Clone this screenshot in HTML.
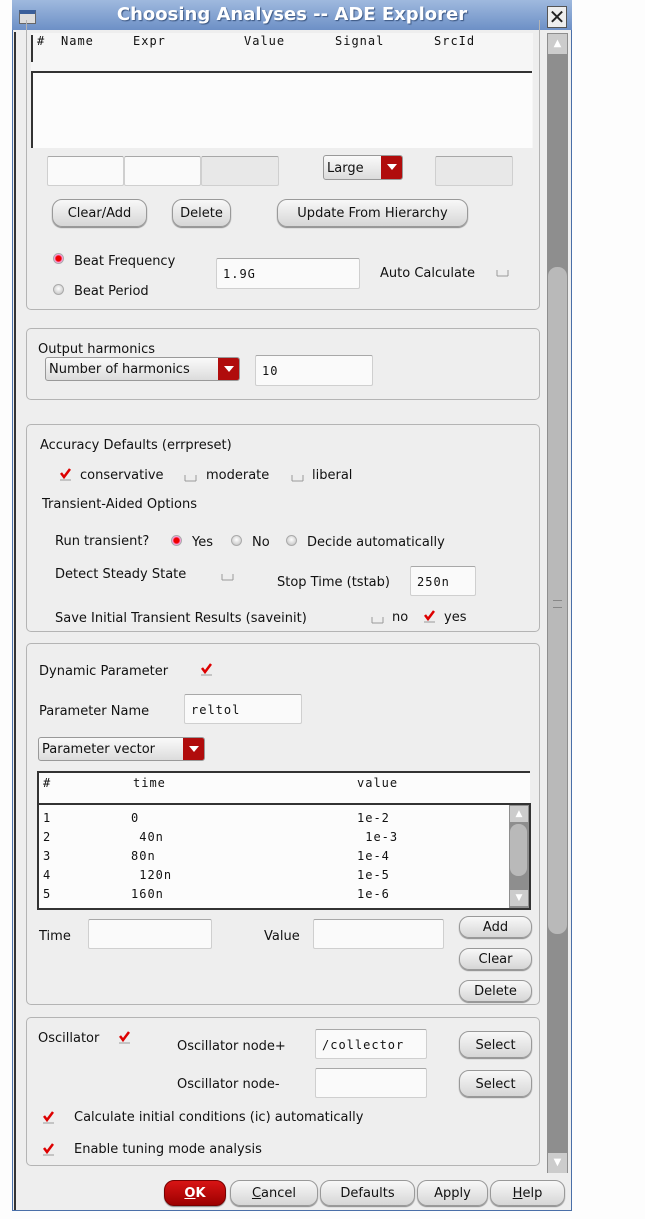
<!DOCTYPE html>
<html><head><meta charset="utf-8"><style>
*{box-sizing:border-box;margin:0;padding:0}
body{width:645px;height:1219px;background:#fdfdfd;position:relative;overflow:hidden;font-family:"DejaVu Sans","Liberation Sans",sans-serif;font-size:13px;color:#111}
.a{position:absolute}
div[class="a"]{margin-top:2px}
.win{left:12px;top:0;width:560px;height:1211px;background:#eeeeee;border:1px solid #4a6fa8;border-top:none}
.title{left:12px;top:0;width:560px;height:30px;background:linear-gradient(#9fb9de,#6d90c6);color:#fff;font-weight:bold;font-size:18px;text-align:center;line-height:30px;text-shadow:1px 1px 1px #3a5580}
.grp{border:1px solid #b4b4b4;border-radius:5px}
.inp{background:#fafafa;border:1px solid #cfcfcf;border-top-color:#a8a8a8;border-radius:2px;font-family:"DejaVu Sans Mono","Liberation Mono",monospace;font-size:12px;padding:4px 6px;letter-spacing:1px}
.btn{background:linear-gradient(#f8f8f8,#d6d6d6);border:1px solid #999;border-radius:10px;text-align:center;font-size:13px;box-shadow:0 1px 1px #888;padding-top:2px}
.dd{background:linear-gradient(#fafafa,#dcdcdc);border:1px solid #999;border-radius:3px;font-size:13px;padding-left:3px;padding-top:2px;overflow:hidden}
.dd i{position:absolute;right:0;top:0;bottom:0;width:21px;background:#b00c0c}
.dd i:after{content:"";position:absolute;left:6px;top:8px;border-left:5px solid transparent;border-right:5px solid transparent;border-top:6px solid #fff}
.mono{font-family:"DejaVu Sans Mono","Liberation Mono",monospace;font-size:12px;letter-spacing:1px;margin-top:1px}
.cb{width:13px;height:13px}
.rad{width:11px;height:11px;border-radius:50%;background:radial-gradient(circle at 50% 40%,#fff,#bbb);border:1px solid #aaa}
.rad.on{background:radial-gradient(circle,#e00 40%,#f9d 60%,#ddd)}
</style></head><body>
<div class="a win"></div>
<div class="a title">Choosing Analyses -- ADE Explorer</div>
<div class="a" style="left:19px;top:8px;width:17px;height:14px;background:#ddd;border:1px solid #666;border-top:4px solid #3a5f9a"></div>
<div class="a" style="left:547px;top:4px;width:20px;height:22px;background:#eee;border:1px solid #555;font-size:20px;line-height:20px;text-align:center;color:#222">✕</div>
<div class="a" style="left:14px;top:30px;width:2px;height:1178px;background:#333"></div>
<!-- scrollbar -->
<div class="a" style="left:547px;top:31px;width:21px;height:1140px;background:#8e8e8e"></div>
<div class="a" style="left:548px;top:32px;width:19px;height:20px;background:#ccc;color:#fff;font-size:10px;text-align:center;line-height:20px">▲</div>
<div class="a" style="left:548px;top:265px;width:19px;height:667px;background:#b9b9b9;border-radius:9px"></div>
<div class="a" style="left:553px;top:598px;width:9px;height:8px;border-top:1px solid #888;border-bottom:1px solid #888"></div>
<div class="a" style="left:548px;top:1151px;width:19px;height:20px;background:#ccc;color:#fff;font-size:10px;text-align:center;line-height:20px">▼</div>

<div class="a grp" style="left:26px;top:20px;width:514px;height:290px;border-top:none;border-radius:0 0 5px 5px"></div>
<!-- top table -->
<div class="a" style="left:31px;top:31px;width:502px;height:115px;background:#f6f6f6"></div>
<div class="a" style="left:31px;top:33px;width:2px;height:27px;background:#333"></div>
<div class="a mono" style="left:37px;top:33px;">#</div>
<div class="a mono" style="left:61px;top:33px;">Name</div>
<div class="a mono" style="left:133px;top:33px;">Expr</div>
<div class="a mono" style="left:244px;top:33px;">Value</div>
<div class="a mono" style="left:335px;top:33px;">Signal</div>
<div class="a mono" style="left:434px;top:33px;">SrcId</div>
<div class="a" style="left:31px;top:69px;width:501px;height:77px;background:#fcfcfc;border-top:2px solid #333;border-left:2px solid #333"></div>
<div class="a inp" style="left:47px;top:156px;width:77px;height:30px"></div>
<div class="a inp" style="left:124px;top:156px;width:77px;height:30px"></div>
<div class="a inp" style="left:201px;top:156px;width:78px;height:30px;background:#e8e8e8"></div>
<div class="a dd" style="left:323px;top:155px;width:80px;height:25px;line-height:21px">Large<i></i></div>
<div class="a inp" style="left:435px;top:156px;width:78px;height:30px;background:#e8e8e8"></div>
<div class="a btn" style="left:52px;top:199px;width:95px;height:28px;line-height:24px">Clear/Add</div>
<div class="a btn" style="left:172px;top:199px;width:59px;height:28px;line-height:24px">Delete</div>
<div class="a btn" style="left:277px;top:199px;width:191px;height:28px;line-height:24px">Update From Hierarchy</div>
<div class="a rad on" style="left:53px;top:253px"></div>
<div class="a" style="left:74px;top:252px">Beat Frequency</div>
<div class="a rad" style="left:53px;top:284px"></div>
<div class="a" style="left:74px;top:282px">Beat Period</div>
<div class="a inp" style="left:216px;top:258px;width:144px;height:31px;padding-top:8px">1.9G</div>
<div class="a" style="left:380px;top:264px">Auto Calculate</div>
<svg class="a cb" style="left:496px;top:264px" viewBox="0 0 13 13"><path d="M1 12h11M1 6v6M12 6v6" stroke="#999" fill="none"/></svg>

<!-- harmonics -->
<div class="a grp" style="left:26px;top:328px;width:514px;height:72px"></div>
<div class="a" style="left:38px;top:340px">Output harmonics</div>
<div class="a dd" style="left:45px;top:357px;width:195px;height:24px;line-height:20px">Number of harmonics<i></i></div>
<div class="a inp" style="left:255px;top:355px;width:118px;height:31px;padding-top:8px">10</div>

<!-- accuracy -->
<div class="a grp" style="left:26px;top:424px;width:514px;height:208px"></div>
<div class="a" style="left:40px;top:436px">Accuracy Defaults (errpreset)</div>
<svg class="a cb" style="left:59px;top:468px" viewBox="0 0 13 13"><path d="M1 12h11" stroke="#999"/><path d="M2 5l3 4 6-8" stroke="#d00" stroke-width="2.5" fill="none"/></svg>
<div class="a" style="left:80px;top:466px">conservative</div>
<svg class="a cb" style="left:184px;top:469px" viewBox="0 0 13 13"><path d="M1 12h11M1 6v6M12 6v6" stroke="#999" fill="none"/></svg>
<div class="a" style="left:206px;top:466px">moderate</div>
<svg class="a cb" style="left:291px;top:469px" viewBox="0 0 13 13"><path d="M1 12h11M1 6v6M12 6v6" stroke="#999" fill="none"/></svg>
<div class="a" style="left:312px;top:466px">liberal</div>
<div class="a" style="left:42px;top:495px">Transient-Aided Options</div>
<div class="a" style="left:55px;top:532px">Run transient?</div>
<div class="a rad on" style="left:171px;top:535px"></div>
<div class="a" style="left:192px;top:533px">Yes</div>
<div class="a rad" style="left:231px;top:535px"></div>
<div class="a" style="left:252px;top:533px">No</div>
<div class="a rad" style="left:286px;top:535px"></div>
<div class="a" style="left:307px;top:533px">Decide automatically</div>
<div class="a" style="left:55px;top:565px">Detect Steady State</div>
<svg class="a cb" style="left:221px;top:568px" viewBox="0 0 13 13"><path d="M1 12h11M1 6v6M12 6v6" stroke="#999" fill="none"/></svg>
<div class="a" style="left:277px;top:573px">Stop Time (tstab)</div>
<div class="a inp" style="left:410px;top:566px;width:66px;height:30px;padding-top:8px">250n</div>
<div class="a" style="left:55px;top:609px">Save Initial Transient Results (saveinit)</div>
<svg class="a cb" style="left:371px;top:611px" viewBox="0 0 13 13"><path d="M1 12h11M1 6v6M12 6v6" stroke="#999" fill="none"/></svg>
<div class="a" style="left:392px;top:608px">no</div>
<svg class="a cb" style="left:423px;top:610px" viewBox="0 0 13 13"><path d="M1 12h11" stroke="#999"/><path d="M2 5l3 4 6-8" stroke="#d00" stroke-width="2.5" fill="none"/></svg>
<div class="a" style="left:444px;top:608px">yes</div>

<!-- dynamic param -->
<div class="a grp" style="left:26px;top:643px;width:514px;height:362px"></div>
<div class="a" style="left:39px;top:662px">Dynamic Parameter</div>
<svg class="a cb" style="left:200px;top:663px" viewBox="0 0 13 13"><path d="M1 12h11" stroke="#999"/><path d="M2 5l3 4 6-8" stroke="#d00" stroke-width="2.5" fill="none"/></svg>
<div class="a" style="left:39px;top:702px">Parameter Name</div>
<div class="a inp" style="left:184px;top:694px;width:118px;height:30px;padding-top:8px">reltol</div>
<div class="a dd" style="left:38px;top:737px;width:167px;height:24px;line-height:20px">Parameter vector<i></i></div>
<div class="a" style="left:37px;top:769px;width:493px;height:32px;background:#fcfcfc;border-top:2px solid #333;border-left:2px solid #333"></div>
<div class="a mono" style="left:43px;top:775px">#</div>
<div class="a mono" style="left:133px;top:775px">time</div>
<div class="a mono" style="left:357px;top:775px">value</div>
<div class="a" style="left:37px;top:801px;width:494px;height:107px;background:#fcfcfc;border:2px solid #333"></div>
<div class="a" style="left:509px;top:803px;width:20px;height:103px;background:#8e8e8e"></div>
<div class="a" style="left:510px;top:804px;width:18px;height:16px;background:#ccc;color:#fff;font-size:9px;text-align:center;line-height:16px">▲</div>
<div class="a" style="left:510px;top:822px;width:17px;height:52px;background:#b9b9b9;border-radius:8px"></div>
<div class="a" style="left:510px;top:888px;width:18px;height:16px;background:#ccc;color:#fff;font-size:9px;text-align:center;line-height:16px">▼</div>
<div class="a mono" style="left:43px;top:808px;line-height:19px">1<br>2<br>3<br>4<br>5</div>
<div class="a mono" style="left:131px;top:808px;line-height:19px">0<br>&nbsp;40n<br>80n<br>&nbsp;120n<br>160n</div>
<div class="a mono" style="left:357px;top:808px;line-height:19px">1e-2<br>&nbsp;1e-3<br>1e-4<br>1e-5<br>1e-6</div>
<div class="a" style="left:39px;top:927px">Time</div>
<div class="a inp" style="left:88px;top:919px;width:124px;height:30px"></div>
<div class="a" style="left:264px;top:927px">Value</div>
<div class="a inp" style="left:313px;top:919px;width:131px;height:30px"></div>
<div class="a btn" style="left:459px;top:916px;width:73px;height:22px;line-height:18px">Add</div>
<div class="a btn" style="left:459px;top:948px;width:73px;height:22px;line-height:18px">Clear</div>
<div class="a btn" style="left:459px;top:980px;width:73px;height:22px;line-height:18px">Delete</div>

<!-- oscillator -->
<div class="a grp" style="left:26px;top:1017px;width:514px;height:149px"></div>
<div class="a" style="left:38px;top:1029px">Oscillator</div>
<svg class="a cb" style="left:118px;top:1031px" viewBox="0 0 13 13"><path d="M1 12h11" stroke="#999"/><path d="M2 5l3 4 6-8" stroke="#d00" stroke-width="2.5" fill="none"/></svg>
<div class="a" style="left:177px;top:1037px">Oscillator node+</div>
<div class="a inp" style="left:315px;top:1029px;width:112px;height:30px;padding-top:8px">/collector</div>
<div class="a btn" style="left:459px;top:1031px;width:73px;height:27px;line-height:23px">Select</div>
<div class="a" style="left:177px;top:1075px">Oscillator node-</div>
<div class="a inp" style="left:315px;top:1068px;width:112px;height:30px"></div>
<div class="a btn" style="left:459px;top:1070px;width:73px;height:27px;line-height:23px">Select</div>
<svg class="a cb" style="left:42px;top:1111px" viewBox="0 0 13 13"><path d="M1 12h11" stroke="#999"/><path d="M2 5l3 4 6-8" stroke="#d00" stroke-width="2.5" fill="none"/></svg>
<div class="a" style="left:74px;top:1108px">Calculate initial conditions (ic) automatically</div>
<svg class="a cb" style="left:42px;top:1143px" viewBox="0 0 13 13"><path d="M1 12h11" stroke="#999"/><path d="M2 5l3 4 6-8" stroke="#d00" stroke-width="2.5" fill="none"/></svg>
<div class="a" style="left:74px;top:1140px">Enable tuning mode analysis</div>

<!-- bottom buttons -->
<div class="a btn" style="left:164px;top:1180px;width:62px;height:26px;line-height:22px;background:linear-gradient(#d81414,#9c0000);color:#fff;font-weight:bold;border-color:#700"><u>O</u>K</div>
<div class="a btn" style="left:230px;top:1180px;width:88px;height:26px;line-height:22px"><u>C</u>ancel</div>
<div class="a btn" style="left:320px;top:1180px;width:95px;height:26px;line-height:22px">Defaults</div>
<div class="a btn" style="left:417px;top:1180px;width:71px;height:26px;line-height:22px">Apply</div>
<div class="a btn" style="left:490px;top:1180px;width:75px;height:26px;line-height:22px"><u>H</u>elp</div>
</body></html>
